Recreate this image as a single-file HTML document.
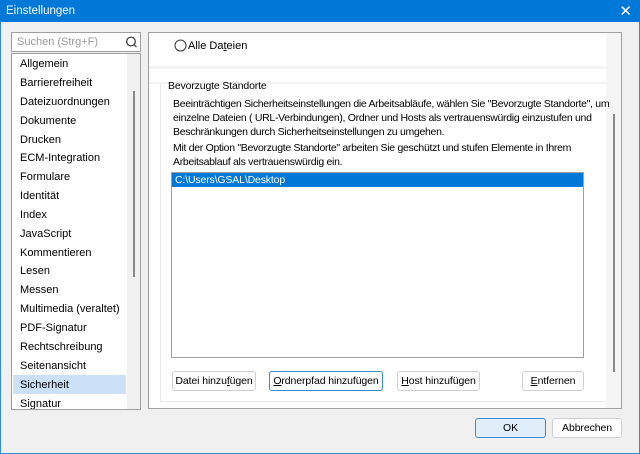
<!DOCTYPE html>
<html><head><meta charset="utf-8"><style>
*{margin:0;padding:0;box-sizing:border-box}
body{width:640px;height:454px;background:#f0f0f0;font-family:"Liberation Sans",sans-serif;font-size:11px;color:#000;position:relative;overflow:hidden}
.a{position:absolute;white-space:nowrap}
.title{left:0;top:0;width:640px;height:22px;background:#0078d7;color:#fff;font-size:11.5px;padding:5px 0 0 6px}
.btn{position:absolute;height:20px;background:#fdfdfd;border:1px solid #d0d0d0;border-radius:3px;text-align:center;line-height:18px;font-size:10.5px;white-space:nowrap;letter-spacing:-0.1px}
.li{position:absolute;left:8px;font-size:11px;white-space:nowrap}
.t{font-size:10.5px;letter-spacing:-0.15px}
.p{font-size:10.5px;letter-spacing:-0.3px}
</style></head><body>
<div class="a title">Einstellungen</div>
<div class="a" style="right:8px;top:2px;color:#fff;font-size:15px">✕</div>
<div class="a" style="left:0;top:22px;width:1px;height:432px;background:#3a8ad0"></div>
<div class="a" style="right:0;top:22px;width:1px;height:432px;background:#3a8ad0"></div>
<div class="a" style="left:0;bottom:0;width:640px;height:1px;background:#3a8ad0"></div>

<div class="a" style="left:11px;top:32px;width:130px;height:20px;background:#fff;border:1px solid #a0a0a0"></div>
<div class="a" style="left:17px;top:36px;color:#9a9a9a">Suchen (Strg+F)</div>
<svg class="a" style="left:125px;top:36px" width="12" height="12"><circle cx="6" cy="5.5" r="4.3" fill="none" stroke="#333" stroke-width="1.2"/><line x1="9" y1="8.5" x2="11.5" y2="11" stroke="#333" stroke-width="1.2"/></svg>

<div class="a" style="left:11px;top:53px;width:130px;height:357px;background:#fff;border:1px solid #a0a0a0;overflow:hidden">
<div class="a" style="left:1px;top:321px;width:113px;height:19px;background:#cce0f8"></div>
<div class="a" style="left:115px;top:0;width:14px;height:357px;background:#f0f0f0"></div>
<div class="a" style="left:121px;top:37px;width:2px;height:186px;background:#888"></div>
<div class="li" style="top:4px">Allgemein</div>
<div class="li" style="top:23px">Barrierefreiheit</div>
<div class="li" style="top:42px">Dateizuordnungen</div>
<div class="li" style="top:61px">Dokumente</div>
<div class="li" style="top:80px">Drucken</div>
<div class="li" style="top:98px">ECM-Integration</div>
<div class="li" style="top:117px">Formulare</div>
<div class="li" style="top:136px">Identität</div>
<div class="li" style="top:155px">Index</div>
<div class="li" style="top:174px">JavaScript</div>
<div class="li" style="top:193px">Kommentieren</div>
<div class="li" style="top:211px">Lesen</div>
<div class="li" style="top:230px">Messen</div>
<div class="li" style="top:249px">Multimedia (veraltet)</div>
<div class="li" style="top:268px">PDF-Signatur</div>
<div class="li" style="top:287px">Rechtschreibung</div>
<div class="li" style="top:306px">Seitenansicht</div>
<div class="li" style="top:325px">Sicherheit</div>
<div class="li" style="top:344px">Signatur</div>
</div>

<div class="a" style="left:148px;top:32px;width:474px;height:377px;background:#fff;border:1px solid #a0a0a0;overflow:hidden">
<div class="a" style="left:457px;top:0;width:16px;height:377px;background:#f5f5f5"></div>
<div class="a" style="left:464px;top:81px;width:2px;height:258px;background:#888"></div>
<div class="a" style="left:0;top:33px;width:457px;height:3px;background:#f3f3f3"></div>
<div class="a" style="left:0;top:49px;width:457px;height:2px;background:#f3f3f3"></div>
<div class="a" style="left:11px;top:51px;width:1px;height:318px;background:#e8e8e8"></div>
<div class="a" style="left:11px;top:368px;width:446px;height:1px;background:#e8e8e8"></div>
<svg class="a" style="left:25px;top:6px" width="13" height="13"><circle cx="6.5" cy="6.5" r="5.5" fill="#fff" stroke="#333"/></svg>
<div class="a" style="left:39px;top:7px">Alle Da<u>t</u>eien</div>
<div class="a t" style="left:19px;top:47px">Bevorzugte Standorte</div>
<div class="a p" style="left:24px;top:64px;line-height:14px">Beeinträchtigen Sicherheitseinstellungen die Arbeitsabläufe, wählen Sie "Bevorzugte Standorte", um<br>einzelne Dateien ( URL-Verbindungen), Ordner und Hosts als vertrauenswürdig einzustufen und<br>Beschränkungen durch Sicherheitseinstellungen zu umgehen.</div>
<div class="a p" style="left:24px;top:108px;line-height:14px">Mit der Option "Bevorzugte Standorte" arbeiten Sie geschützt und stufen Elemente in Ihrem<br>Arbeitsablauf als vertrauenswürdig ein.</div>
<div class="a" style="left:22px;top:139px;width:413px;height:186px;border:1px solid #a0a0a0;background:#fff">
<div class="a t" style="left:0;top:0;width:411px;height:14px;background:#0078d7;color:#fff;padding-left:3px;line-height:14px">C:\Users\GSAL\Desktop</div>
</div>
<div class="btn" style="left:23px;top:338px;width:84px">Datei hinzu<u>f</u>ügen</div>
<div class="btn" style="left:120px;top:338px;width:114px;border-color:#3a8ad0"><u>O</u>rdnerpfad hinzufügen</div>
<div class="btn" style="left:248px;top:338px;width:83px"><u>H</u>ost hinzufügen</div>
<div class="btn" style="left:373px;top:338px;width:62px"><u>E</u>ntfernen</div>
</div>

<div class="btn" style="left:475px;top:418px;width:71px;height:20px;background:#e0eef9;border-color:#3a8ad0">OK</div>
<div class="btn" style="left:552px;top:418px;width:70px;height:20px">Abbrechen</div>
</body></html>
